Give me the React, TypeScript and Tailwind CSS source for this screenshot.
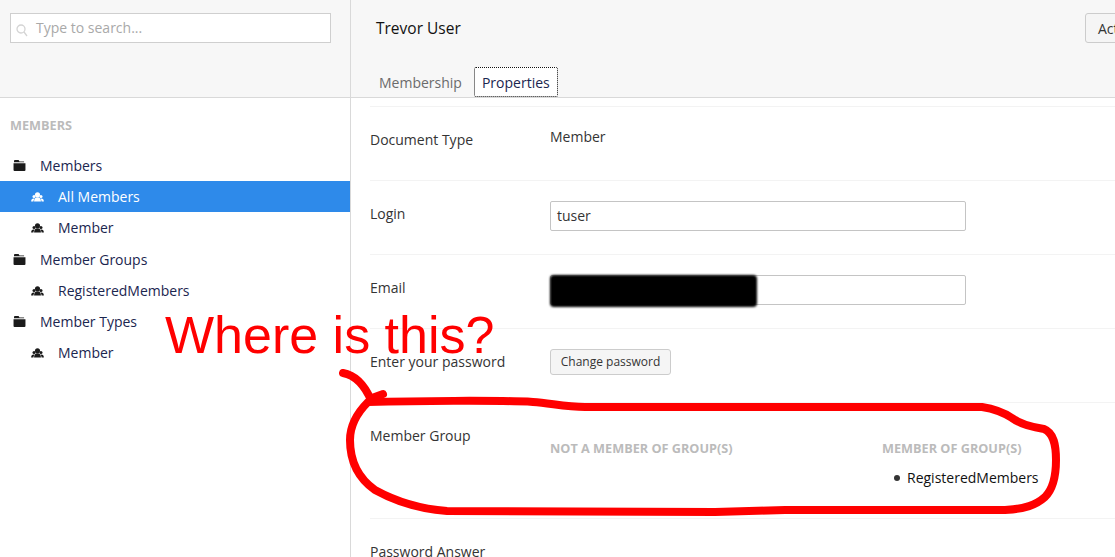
import React from 'react';

const FolderIcon = () => (
  <svg width="13" height="11" viewBox="0 0 14 12" className="text-[#1b1b1b]" fill="currentColor">
    <path d="M2 0h4l1 1.500h5v1H1V1a1 1 0 0 1 1-1z" />
    <path d="M.5 3.500h13V11a1 1 0 0 1-1 1h-11a1 1 0 0 1-1-1z" />
  </svg>
);

const MembersIcon = ({ className }: { className: string }) => (
  <svg width="13" height="10" viewBox="0 0 14 11" className={className} fill="currentColor">
    <circle cx="7" cy="3" r="2.800" />
    <path d="M3.200 10.500c0-3 1.500-4.700 3.800-4.700s3.800 1.700 3.800 4.700z" />
    <circle cx="3.200" cy="5" r="1.700" />
    <circle cx="10.800" cy="5" r="1.700" />
    <path d="M0 10.500c0-2.200 1-3.400 2.800-3.400.4 0 .7.1 1 .2C3 8.100 2.600 9.200 2.500 10.500z" />
    <path d="M14 10.500c0-2.200-1-3.400-2.800-3.400-.4 0-.7.1-1 .2.800.8 1.200 1.900 1.300 3.200z" />
  </svg>
);

const Folder = ({ label }: { label: string }) => (
  <div className="flex h-[31px] items-center pl-[13px] text-[#1b264f]">
    <FolderIcon />
    <span className="ml-[14px]">{label}</span>
  </div>
);

const Item = ({ label, active }: { label: string; active?: boolean }) => (
  <div className={active ? 'flex h-[31px] items-center pl-[31px] bg-[#2e8aea] text-white' : 'flex h-[31px] items-center pl-[31px] text-[#1b264f]'}>
    <MembersIcon className={active ? 'text-white' : 'text-[#1b1b1b]'} />
    <span className="ml-[14px]">{label}</span>
  </div>
);

const Row = ({ label, height, children }: { label: string; height: string; children?: React.ReactNode }) => (
  <div className={`flex border-b border-[#f3f3f3] pt-[23px] ${height}`}>
    <div className="w-[180px] shrink-0 text-[#343434] leading-[20px]">{label}</div>
    <div className="flex-1">{children}</div>
  </div>
);

export default function App() {
  return (
    <div className="relative flex h-[557px] w-[1115px] overflow-hidden bg-white text-[14px] font-['Open_Sans',sans-serif]">
      {/* sidebar */}
      <div className="flex w-[351px] shrink-0 flex-col border-r border-[#d9d9d9]">
        <div className="h-[98px] shrink-0 border-b border-[#d9d9d9] bg-[#f7f7f7] pl-[10px] pt-[13px]">
          <div className="flex h-[30px] w-[321px] items-center border border-[#cfcfcf] bg-white pl-[5px]">
            <svg width="12" height="13" viewBox="0 0 12 13" fill="none" stroke="#d4d4d4" strokeWidth="1.300" className="mt-[4px]">
              <circle cx="5" cy="5" r="4" />
              <path d="M8 8l3 4" />
            </svg>
            <span className="ml-[8px] -mt-[2px] text-[#a9a9a9]">Type to search...</span>
          </div>
        </div>
        <div className="pt-[17px]">
          <div className="pl-[10px] text-[12.700px] font-bold leading-[20px] text-[#bbbbbb]">MEMBERS</div>
          <div className="mt-[15px]">
            <Folder label="Members" />
            <Item label="All Members" active />
            <div className="mb-px">
              <Item label="Member" />
            </div>
            <Folder label="Member Groups" />
            <Item label="RegisteredMembers" />
            <Folder label="Member Types" />
            <Item label="Member" />
          </div>
        </div>
      </div>

      {/* editor */}
      <div className="flex min-w-0 flex-1 flex-col">
        <div className="flex h-[98px] shrink-0 flex-col border-b border-[#d9d9d9] bg-[#f7f7f7]">
          <div className="flex h-[68px] items-start justify-between pl-[25px] pt-[13px]">
            <span className="text-[15.500px] leading-[30px] text-[#111111]">Trevor User</span>
            <div className="-mr-[40px] flex h-[30px] w-[70px] items-center rounded-[3px] border border-[#cccccc] bg-[#f5f5f5] pl-[12px] text-[#343434]">Actions</div>
          </div>
          <div className="flex h-[30px] pl-[28px]">
            <div className="pr-[12px] leading-[31px] text-[#6b6b6b]">Membership</div>
            <div className="h-[30px] rounded-[2px] border border-dotted border-[#111111] bg-white px-[7px] leading-[29px] text-[#1b264f]">Properties</div>
          </div>
        </div>
        <div className="pl-[19px]">
          <div className="h-[9px] border-b border-[#f3f3f3]" />
          <Row label="Document Type" height="h-[74px]">
            <div className="-mt-[4px] text-[#343434]">Member</div>
          </Row>
          <Row label="Login" height="h-[74px]">
            <div className="-mt-[3px] flex h-[30px] w-[416px] items-center rounded-[2px] border border-[#c4c4c4] px-[6px] pb-[2px] text-[#343434]">tuser</div>
          </Row>
          <Row label="Email" height="h-[74px]">
            <div className="relative -mt-[3px] h-[30px] w-[416px] rounded-[2px] border border-[#c4c4c4]">
              <div className="absolute -left-[1px] -top-[1px] h-[32px] w-[207px] rounded-[4px] bg-black blur-[1px]" />
            </div>
          </Row>
          <Row label="Enter your password" height="h-[74px]">
            <div className="-mt-[3px] flex h-[26px] w-[121px] items-center justify-center rounded-[3px] border border-[#cccccc] bg-[#f5f5f5] text-[12px] text-[#343434]">Change password</div>
          </Row>
          <Row label="Member Group" height="h-[116px]">
            <div className="flex pt-[12px]">
              <div className="w-[332px] text-[12.700px] font-bold leading-[20px] text-[#bbbbbb]">NOT A MEMBER OF GROUP(S)</div>
              <div>
                <div className="text-[12.700px] font-bold leading-[20px] text-[#bbbbbb]">MEMBER OF GROUP(S)</div>
                <div className="mt-[10px] flex items-center pl-[12px] text-[#111111] leading-[20px]">
                  <span className="h-[6px] w-[6px] rounded-full bg-[#343434]" />
                  <span className="ml-[7px]">RegisteredMembers</span>
                </div>
              </div>
            </div>
          </Row>
          <div className="pt-[23px] leading-[20px] text-[#343434]">Password Answer</div>
        </div>
      </div>

      {/* hand-drawn annotation on top of the screenshot */}
      <div className="absolute left-[165px] top-[305px] text-[52px] leading-[60px] text-[#ff0000] font-['Liberation_Sans',sans-serif]">Where is this?</div>
      <svg className="absolute left-0 top-0 blur-[0.5px]" width="1115" height="557" viewBox="0 0 1115 557" fill="none" stroke="#ff0000" strokeWidth="8" strokeLinecap="round" strokeLinejoin="round">
        <path d="M343 373C354 375 364 384 371 400" />
        <path d="M372 398L383 394" />
        <path d="M368 402C410 401 500 400 533 402C550 403 565 407 585 407L982 407C995 409 1003 412 1012 418C1020 424 1030 427 1044 429C1054 433 1056 445 1056 460C1056 478 1052 490 1045 497C1036 505 1025 509 1005 510L785 510L715 512L447 511C420 509 395 501 375 490C358 478 350 462 350 440C350 425 358 412 368 402Z" />
      </svg>
    </div>
  );
}
